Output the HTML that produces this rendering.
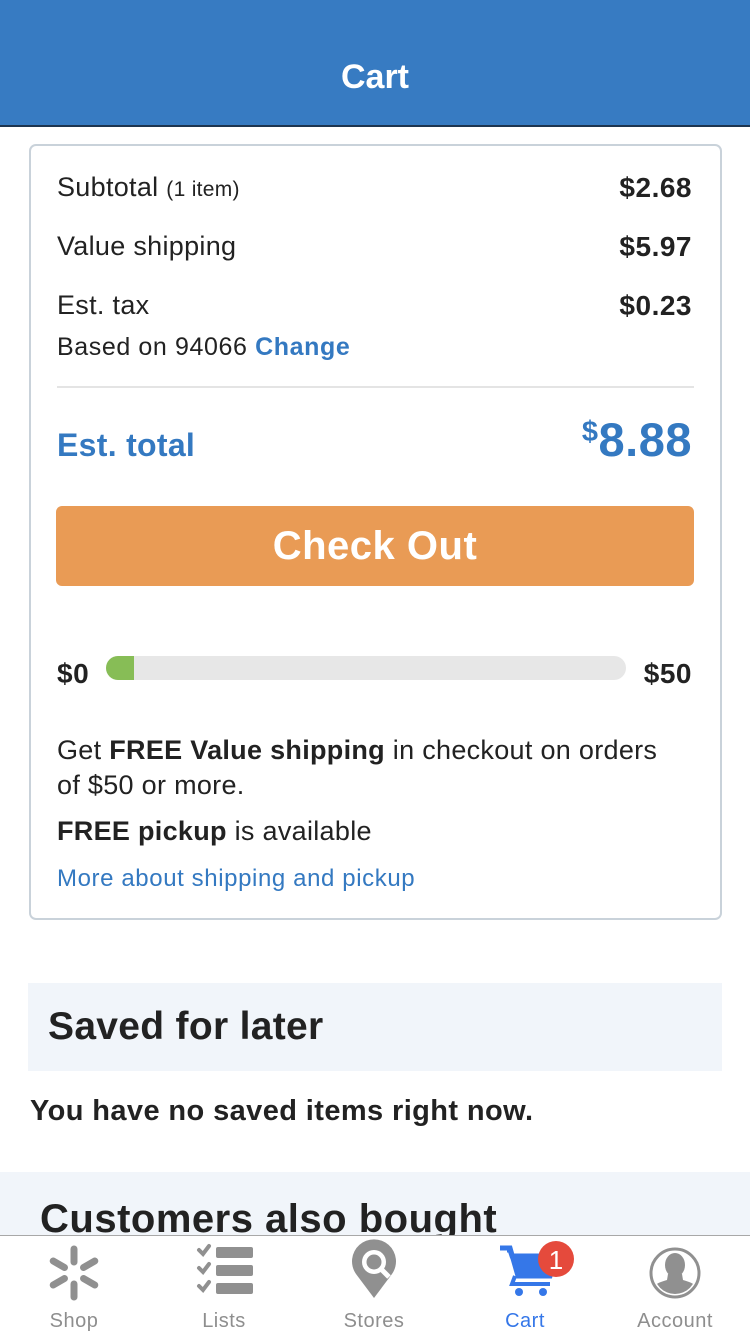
<!DOCTYPE html>
<html><head><meta charset="utf-8"><style>
*{margin:0;padding:0;box-sizing:border-box}
body{width:750px;height:1334px;position:relative;overflow:hidden;background:#fff;font-family:"Liberation Sans",Arial,sans-serif;color:#222}
.a{position:absolute;white-space:nowrap}
.b{font-weight:bold}
.blue{color:#3479c1}
.p{font-size:28px;letter-spacing:0.5px;font-weight:bold}
.t{font-size:27px;letter-spacing:0.3px}
</style></head><body>
<div class="a" style="left:0;top:0;width:750px;height:127px;background:#377bc2;border-bottom:2px solid #1d3550"></div>
<div class="a b" style="left:0;width:750px;top:58px;text-align:center;color:#fff;font-size:34px">Cart</div>

<div class="a" style="left:29px;top:144px;width:693px;height:776px;border:2px solid #c9d2da;border-radius:7px"></div>
<div class="a t" style="left:57px;top:172px">Subtotal <span style="font-size:21px">(1 item)</span></div>
<div class="a p" style="right:58px;top:172px">$2.68</div>
<div class="a t" style="left:57px;top:231px">Value shipping</div>
<div class="a p" style="right:58px;top:231px">$5.97</div>
<div class="a t" style="left:57px;top:290px">Est. tax</div>
<div class="a p" style="right:58px;top:290px">$0.23</div>
<div class="a" style="left:57px;top:333px;font-size:25px;letter-spacing:0.6px">Based on 94066 <span class="b blue">Change</span></div>
<div class="a" style="left:57px;top:386px;width:637px;height:2px;background:#e4e4e4"></div>
<div class="a b blue" style="left:57px;top:427px;font-size:32px;letter-spacing:0.3px">Est. total</div>
<div class="a b blue" style="right:58px;top:412px;font-size:47px;letter-spacing:0.5px"><span style="font-size:29px;vertical-align:15px">$</span>8.88</div>
<div class="a b" style="left:56px;top:506px;width:638px;height:80px;background:#e99b55;border-radius:6px;color:#fff;font-size:40px;text-align:center;line-height:80px;letter-spacing:0.5px">Check Out</div>
<div class="a p" style="left:57px;top:658px">$0</div>
<div class="a" style="left:106px;top:656px;width:520px;height:24px;background:#e7e7e7;border-radius:12px;overflow:hidden"><div style="width:28px;height:24px;background:#87bd56"></div></div>
<div class="a p" style="right:58px;top:658px">$50</div>
<div class="a" style="left:57px;top:733px;font-size:27px;letter-spacing:0.3px;line-height:35px;white-space:normal;width:618px">Get <b>FREE Value shipping</b> in checkout on orders of $50 or more.</div>
<div class="a" style="left:57px;top:816px;font-size:27px;letter-spacing:0.3px"><b>FREE pickup</b> is available</div>
<div class="a blue" style="left:57px;top:865px;font-size:24px;letter-spacing:0.6px">More about shipping and pickup</div>

<div class="a" style="left:28px;top:983px;width:694px;height:88px;background:#f1f5fa"></div>
<div class="a b" style="left:48px;top:1005px;font-size:39px;letter-spacing:0.3px">Saved for later</div>
<div class="a b" style="left:30px;top:1095px;font-size:29px;letter-spacing:0.4px">You have no saved items right now.</div>
<div class="a" style="left:0;top:1172px;width:750px;height:70px;background:#f1f5fa"></div>
<div class="a b" style="left:40px;top:1197px;font-size:40px;letter-spacing:0.5px">Customers also bought</div>

<div class="a" style="left:0;top:1235px;width:750px;height:99px;background:#fff;border-top:1px solid #a8a8a8"></div>
<svg class="a" style="left:0;top:1236px" width="750" height="98">
 <g stroke="#909090" stroke-width="7" stroke-linecap="round">
  <g transform="translate(74 37)">
   <line x1="0" y1="-11" x2="0" y2="-24"/>
   <line x1="0" y1="-11" x2="0" y2="-24" transform="rotate(60)"/>
   <line x1="0" y1="-11" x2="0" y2="-24" transform="rotate(120)"/>
   <line x1="0" y1="-11" x2="0" y2="-24" transform="rotate(180)"/>
   <line x1="0" y1="-11" x2="0" y2="-24" transform="rotate(240)"/>
   <line x1="0" y1="-11" x2="0" y2="-24" transform="rotate(300)"/>
  </g>
 </g>
 <g fill="#909090">
  <rect x="216" y="11" width="37" height="11" rx="2"/><rect x="216" y="29" width="37" height="11" rx="2"/><rect x="216" y="47" width="37" height="11" rx="2"/>
  <path d="M199 14l4 4 6-8M199 32l4 4 6-8M199 50l4 4 6-8" stroke="#909090" stroke-width="4" fill="none" stroke-linecap="round"/>
  <path d="M374 62 L356 38 A22 22 0 1 1 392 38 Z"/>
  <circle cx="374" cy="26" r="12" fill="#fff"/><circle cx="374" cy="26" r="7.5"/>
  <path d="M381 33l8 8" stroke="#fff" stroke-width="5"/>
  <circle cx="675" cy="37" r="24" fill="none" stroke="#909090" stroke-width="3"/>
  <clipPath id="c"><circle cx="675" cy="37" r="21"/></clipPath>
  <g clip-path="url(#c)">
   <ellipse cx="675" cy="29" rx="10" ry="12"/>
   <path d="M668 38 L682 38 L683 44 C694 47 700 51 702 60 L648 60 C650 51 656 47 667 44 Z"/>
  </g>
 </g>
 <g fill="#3577e8">
  <path d="M500 12h10l8 28h32l5-20h-43l-2-6h-3" fill="none" stroke="#3577e8" stroke-width="5"/>
  <path d="M513 18h42l-6 22h-32z"/>
  <path d="M515 40l-3 8h38" fill="none" stroke="#3577e8" stroke-width="4"/>
  <circle cx="519" cy="56" r="4"/><circle cx="543" cy="56" r="4"/>
 </g>
 <circle cx="556" cy="23" r="18" fill="#e54a3c"/>
 <text x="556" y="33" fill="#fff" font-size="26" text-anchor="middle" font-family="Liberation Sans">1</text>
 <g font-size="20" font-family="Liberation Sans" text-anchor="middle" fill="#8e8e8e" letter-spacing="0.5">
  <text x="74" y="91">Shop</text><text x="224" y="91">Lists</text><text x="374" y="91">Stores</text>
  <text x="525" y="91" fill="#3577e8">Cart</text><text x="675" y="91">Account</text>
 </g>
</svg>
</body></html>
